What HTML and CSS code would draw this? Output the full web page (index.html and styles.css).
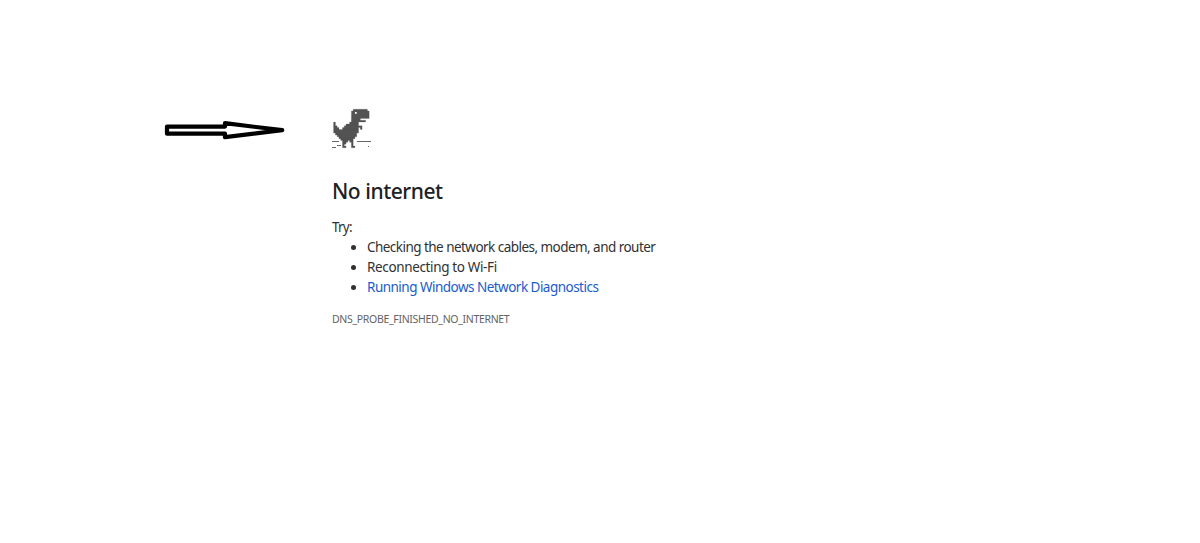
FILE: index.html
```
<!DOCTYPE html>
<html lang="en">
<head>
  <meta charset="UTF-8">
  <title>No internet</title>
  <link rel="stylesheet" href="styles.css">
</head>
<body>
  <div class="page">
    <svg class="arrow" width="122" height="20" viewBox="0 0 122 20">
      <path d="M4 6.6H62V3.2L119.2 10.2L62 17.2V13.7H4Z" fill="#fff" stroke="#000" stroke-width="4.2" stroke-linejoin="round"/>
    </svg>

    <div class="content">
      <svg class="dino" width="48" height="48" viewBox="0 0 48 48">
        <!-- body, one subpath per pixel row -->
        <g transform="translate(5.6 5.2) scale(1.78 1.84)">
          <path fill="#535353" stroke="#535353" stroke-width=".12" d="M11 0h8v1h-8zM10 1h10v4h-10zM10 5h5v1h-5zM10 6h8v1h-8zM0 7h1v1h-1zM9 7h5v1h-5zM0 8h1v1h-1zM7 8h7v1h-7zM0 9h2v1h-2zM6 9h10v1h-10zM0 10h3v1h-3zM5 10h9v1h-9zM15 10h1v1h-1zM0 11h14v2h-14zM1 13h12v1h-12zM2 14h11v1h-11zM3 15h9v1h-9zM4 16h7v1h-7zM5 17h3v1h-3zM9 17h2v1h-2zM5 18h2v1h-2zM10 18h1v1h-1zM5 19h1v1h-1zM10 19h1v1h-1zM5 20h2v1h-2zM10 20h2v1h-2z"/>
          <path fill="#fff" d="M12 1.5h1v1h-1z"/>
        </g>
        <path fill="#666" d="M4 37h7v1h-7zM29 37h14v1h-14zM9 41h4v1h-4zM4 43h4v1h-4zM40 42h1v1h-1z"/>
      </svg>
      <h1>No internet</h1>
      <p class="try">Try:</p>
      <ul>
        <li><span class="cables">Checking the network cables, modem, and router</span></li>
        <li><span class="wifi">Reconnecting to Wi-Fi</span></li>
        <li><a class="diagnostics" href="#">Running Windows Network Diagnostics</a></li>
      </ul>
      <div class="error-code">DNS_PROBE_FINISHED_NO_INTERNET</div>
    </div>
  </div>
</body>
</html>
```
FILE: styles.css
```
body { margin: 0; background: #fff; color: #303134; font-family: "Segoe UI", "Noto Sans", sans-serif; font-size: 13.5px; line-height: 20.2px; }
.page { display: flex; align-items: flex-start; padding: 104px 0 0 163px; }
.arrow { margin-top: 16px; }
.content { margin-left: 47px; }
.dino { display: block; margin-left: -4px; }
h1 { margin: 25px 0 0; color: #202124; font-size: 21px; font-weight: 500; line-height: 28px; letter-spacing: -0.45px; }
.try { margin: 11.6px 0 0; letter-spacing: -0.8px; }
ul { margin: 0; padding-left: 35px; }
.cables { letter-spacing: -0.54px; }
.wifi { letter-spacing: -0.36px; }
.diagnostics { letter-spacing: -0.52px; }
a { color: #1a5bce; text-decoration: none; }
.error-code { margin-top: 11.4px; color: #646464; font-size: 10.5px; line-height: 20px; letter-spacing: -0.32px; }
```
